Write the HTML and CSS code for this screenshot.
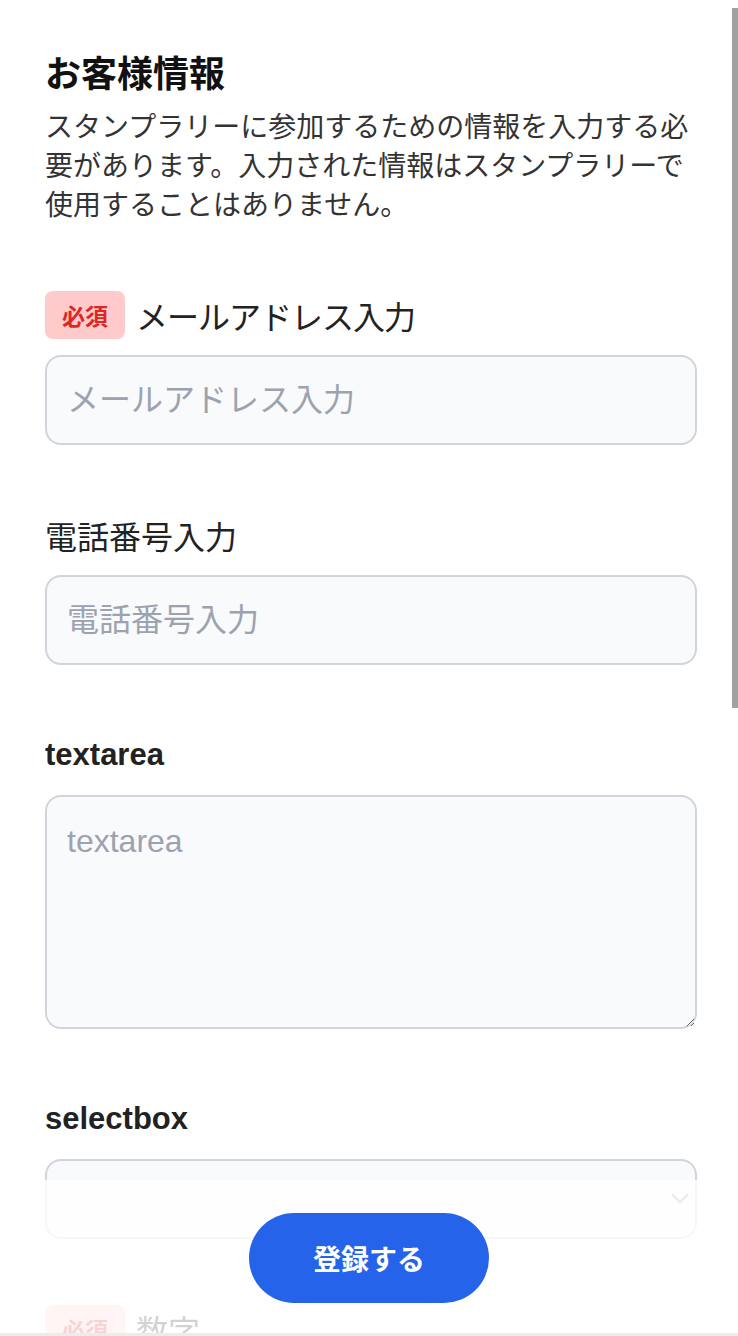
FILE: index.html
```html
<!DOCTYPE html>
<html lang="ja">
<head>
<meta charset="utf-8">
<title>お客様情報</title>
<link rel="stylesheet" href="styles.css">
</head>
<body>
<main class="page">
  <header class="intro">
    <h1 class="title">お客様情報</h1>
    <p class="lead">スタンプラリーに参加するための情報を入力する必要があります。入力された情報はスタンプラリーで使用することはありません。</p>
  </header>
  <form class="form">
    <div class="field">
      <label class="label"><span class="req">必須</span><span class="kana">メールアドレス入力</span></label>
      <input class="control" type="email" placeholder="メールアドレス入力">
    </div>
    <div class="field">
      <label class="label"><span>電話番号入力</span></label>
      <input class="control" type="tel" placeholder="電話番号入力">
    </div>
    <div class="field">
      <label class="label label-strong"><span>textarea</span></label>
      <textarea class="control area" placeholder="textarea"></textarea>
    </div>
    <div class="field">
      <label class="label label-strong"><span>selectbox</span></label>
      <div class="select-wrap">
        <select class="control select"><option value=""></option></select>
        <svg class="chev" width="18" height="11" viewBox="0 0 18 11"><path d="M1 1l8 8 8-8" fill="none" stroke="#8f949c" stroke-width="2"/></svg>
      </div>
    </div>
    <div class="field">
      <label class="label"><span class="req">必須</span><span>数字</span></label>
      <input class="control" type="number" placeholder="数字">
    </div>
  </form>
</main>
<div class="footer"><button class="submit" type="button">登録する</button></div>
<div class="scrollbar"></div>
</body>
</html>
```
FILE: styles.css
```css
html, body { scrollbar-width: none; }
::-webkit-scrollbar { display: none; }
body {
  margin: 0;
  background: #fff;
  font-family: "Liberation Sans", "Noto Sans CJK JP", sans-serif;
  color: #222;
}
.page {
  padding: 52px 41px 200px 45px;
}
.title {
  margin: 0;
  font-size: 36px;
  line-height: 46px;
  font-weight: 700;
  color: #111;
}
.lead {
  margin: 10px 0 0;
  font-size: 28px;
  line-height: 39px;
  color: #333;
}
.form { display: flex; flex-direction: column; }
.field {
  margin-top: 66px;
  display: flex;
  flex-direction: column;
  gap: 16px;
}
.label {
  display: flex;
  align-items: center;
  gap: 11px;
  height: 48px;
  font-size: 32px;
  color: #222;
}
.kana { letter-spacing: -1px; }
.label-strong { font-weight: 700; font-size: 31px; }
.req {
  display: inline-flex;
  align-items: center;
  justify-content: center;
  width: 80px;
  height: 48px;
  border-radius: 8px;
  background: #fecaca;
  color: #dc2626;
  font-size: 23px;
  font-weight: 700;
}
.control {
  box-sizing: border-box;
  width: 100%;
  height: 90px;
  margin: 0;
  padding: 0 20px;
  border: 2px solid #d1d5db;
  border-radius: 16px;
  background: #f9fafb;
  font-family: inherit;
  font-size: 32px;
  color: #222;
  outline: none;
}
.control::placeholder { color: #9ca3af; }
.area {
  height: 234px;
  padding: 20px;
  line-height: 48px;
  resize: vertical;
}
.select-wrap { position: relative; }
.select {
  height: 80px;
  appearance: none;
  -webkit-appearance: none;
}
.chev {
  position: absolute;
  right: 8px;
  top: 34px;
}
.footer {
  position: fixed;
  left: 0;
  right: 0;
  bottom: 0;
  height: 156px;
  box-sizing: border-box;
  display: flex;
  align-items: center;
  justify-content: center;
  background: rgba(255, 255, 255, 0.8);
  border-bottom: 3px solid #ececec;
  padding-top: 3px;
}
.submit {
  width: 240px;
  height: 90px;
  border: 0;
  border-radius: 45px;
  background: #2563eb;
  color: #fff;
  font-family: "Noto Sans CJK JP", sans-serif;
  font-size: 28px;
  font-weight: 700;
}
.scrollbar {
  position: fixed;
  top: 8px;
  right: 0;
  width: 6px;
  height: 700px;
  background: #a1a1a1;
}
```
